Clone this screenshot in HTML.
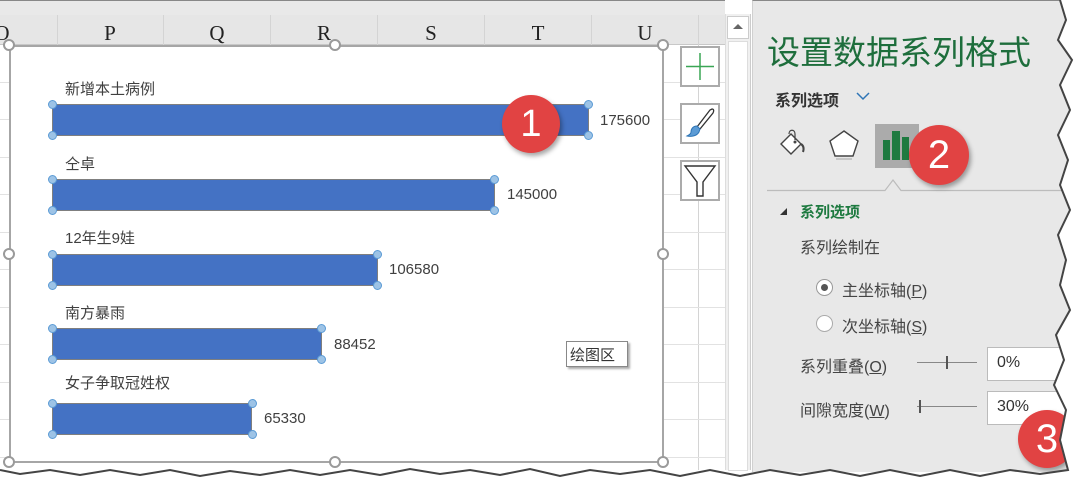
<!DOCTYPE html>
<html><head><meta charset="utf-8"><style>
*{margin:0;padding:0;box-sizing:border-box}
body{width:1080px;height:496px;overflow:hidden;background:#fff;position:relative;font-family:"Liberation Sans","Noto Sans CJK SC",sans-serif}
.abs{position:absolute}
.lbl{position:absolute;font-size:15px;color:#404040;white-space:nowrap}
.val{position:absolute;font-size:15px;color:#404040}
.bar{position:absolute;background:#4472c4;border:1px solid #7f7f7f}
.pt{position:absolute;width:9px;height:9px;border-radius:50%;background:#9dc3e6;border:1px solid #5b9bd5}
.hd{position:absolute;width:12px;height:12px;border-radius:50%;background:#fff;border:2px solid #9a9a9a}
.btn{position:absolute;left:680px;width:40px;height:41px;background:#fff;border:2px solid #ababab}
.badge{position:absolute;border-radius:50%;background:#e14343;color:#fff;text-align:center;font-family:"Liberation Sans",sans-serif;box-shadow:2px 3px 5px rgba(0,0,0,.35)}
.pt2{position:absolute;font-size:16px;color:#444;white-space:nowrap}
</style></head><body>
<div class="abs" style="left:0;top:0;width:1080px;height:470px;background:#fff"></div>
<div class="abs" style="left:0;top:0;width:725px;height:15px;background:#e9e9e9;border-top:1px solid #888"></div>
<div class="abs" style="left:0;top:15px;width:725px;height:30px;background:#e6e6e6;border-bottom:1px solid #c8c8c8"></div>
<svg class="abs" style="left:0;top:0" width="725" height="470">
<g stroke="#d4d4d4" stroke-width="1">
<line x1="57.5" y1="15" x2="57.5" y2="45"/><line x1="163.5" y1="15" x2="163.5" y2="45"/><line x1="270.5" y1="15" x2="270.5" y2="45"/><line x1="377.5" y1="15" x2="377.5" y2="45"/><line x1="484.5" y1="15" x2="484.5" y2="45"/><line x1="591.5" y1="15" x2="591.5" y2="45"/><line x1="698.5" y1="15" x2="698.5" y2="470"/>
</g>
<g stroke="#e2e2e2"><line x1="0" y1="82.5" x2="725" y2="82.5"/><line x1="0" y1="119.5" x2="725" y2="119.5"/><line x1="0" y1="157.5" x2="725" y2="157.5"/><line x1="0" y1="194.5" x2="725" y2="194.5"/><line x1="0" y1="232.5" x2="725" y2="232.5"/><line x1="0" y1="269.5" x2="725" y2="269.5"/><line x1="0" y1="307.5" x2="725" y2="307.5"/><line x1="0" y1="344.5" x2="725" y2="344.5"/><line x1="0" y1="382.5" x2="725" y2="382.5"/><line x1="0" y1="419.5" x2="725" y2="419.5"/><line x1="0" y1="457.5" x2="725" y2="457.5"/></g>
<g font-family="Liberation Serif,serif" font-size="21" fill="#222" text-anchor="middle">
<text x="2" y="40">O</text><text x="110" y="40">P</text><text x="217" y="40">Q</text><text x="324" y="40">R</text><text x="431" y="40">S</text><text x="538" y="40">T</text><text x="645" y="40">U</text></g>
</svg>
<div class="abs" style="left:9px;top:45px;width:655px;height:418px;background:#fff;border:2px solid #a6a6a6"></div>
<div class="hd" style="left:3px;top:39px"></div><div class="hd" style="left:329px;top:39px"></div><div class="hd" style="left:657px;top:39px"></div>
<div class="hd" style="left:3px;top:248px"></div><div class="hd" style="left:657px;top:248px"></div>
<div class="hd" style="left:3px;top:456px"></div><div class="hd" style="left:329px;top:456px"></div><div class="hd" style="left:657px;top:456px"></div>

<div class="lbl" style="left:65px;top:78px">新增本土病例</div>
<div class="bar" style="left:52px;top:104px;width:537px;height:32px"></div>
<div class="val" style="left:600px;top:112px">175600</div>
<div class="lbl" style="left:65px;top:153px">仝卓</div>
<div class="bar" style="left:52px;top:179px;width:443px;height:32px"></div>
<div class="val" style="left:507px;top:186px">145000</div>
<div class="lbl" style="left:65px;top:227px">12年生9娃</div>
<div class="bar" style="left:52px;top:254px;width:326px;height:32px"></div>
<div class="val" style="left:389px;top:261px">106580</div>
<div class="lbl" style="left:65px;top:302px">南方暴雨</div>
<div class="bar" style="left:52px;top:328px;width:270px;height:32px"></div>
<div class="val" style="left:334px;top:336px">88452</div>
<div class="lbl" style="left:65px;top:372px">女子争取冠姓权</div>
<div class="bar" style="left:52px;top:403px;width:200px;height:32px"></div>
<div class="val" style="left:264px;top:410px">65330</div>
<div class="pt" style="left:48px;top:100px"></div><div class="pt" style="left:584px;top:100px"></div><div class="pt" style="left:48px;top:131px"></div><div class="pt" style="left:584px;top:131px"></div>
<div class="pt" style="left:48px;top:175px"></div><div class="pt" style="left:490px;top:175px"></div><div class="pt" style="left:48px;top:206px"></div><div class="pt" style="left:490px;top:206px"></div>
<div class="pt" style="left:48px;top:250px"></div><div class="pt" style="left:373px;top:250px"></div><div class="pt" style="left:48px;top:281px"></div><div class="pt" style="left:373px;top:281px"></div>
<div class="pt" style="left:48px;top:324px"></div><div class="pt" style="left:317px;top:324px"></div><div class="pt" style="left:48px;top:355px"></div><div class="pt" style="left:317px;top:355px"></div>
<div class="pt" style="left:48px;top:399px"></div><div class="pt" style="left:248px;top:399px"></div><div class="pt" style="left:48px;top:430px"></div><div class="pt" style="left:248px;top:430px"></div>
<div class="abs" style="left:566px;top:341px;width:62px;height:26px;background:#fff;border:1px solid #888;box-shadow:2px 2px 2px #aaa;font-size:15px;color:#333;padding:2px 3px">绘图区</div>
<div class="badge" style="left:502px;top:95px;width:58px;height:58px;font-size:38px;line-height:58px">1</div>

<div class="btn" style="top:46px"><svg width="36" height="37"><path d="M18 5V32M4 18.5H32" stroke="#3aa655" stroke-width="1.5"/></svg></div>
<div class="btn" style="top:103px"><svg width="36" height="37"><path d="M30 4c2 0 2 2 1 4L18 24l-3-2L28 5z" fill="#fff" stroke="#333" stroke-width="1.3"/><path d="M15 21c-4 0-6 3-6 6 0 2-2 3-4 4 4 1 10 0 12-4l1-3z" fill="#5b9bd5" stroke="#2e75b6"/></svg></div>
<div class="btn" style="top:160px"><svg width="36" height="37"><path d="M3 4H33L21 20V34H15V20z" fill="#fff" stroke="#333" stroke-width="1.4"/></svg></div>
<div class="abs" style="left:725px;top:14px;width:26px;height:456px;background:#f0f0f0;border-left:1px solid #ddd;border-right:1px solid #ccc"></div>
<div class="abs" style="left:727px;top:16px;width:22px;height:23px;background:#fff;border:1px solid #ccc"></div>
<div class="abs" style="left:733px;top:24px;width:0;height:0;border-left:5px solid transparent;border-right:5px solid transparent;border-bottom:5px solid #666"></div>
<div class="abs" style="left:728px;top:41px;width:20px;height:430px;background:#fff;border:1px solid #ddd"></div>
<div class="abs" style="left:752px;top:0;width:320px;height:472px;background:#e8e8e8;border-left:1px solid #d0d0d0;border-top:1px solid #888"></div>
<div class="abs" style="left:767px;top:26px;font-size:33px;color:#1e6e3c;white-space:nowrap;font-family:'Noto Sans CJK SC',sans-serif">设置数据系列格式</div>
<div class="abs" style="left:775px;top:87px;font-size:16px;font-weight:bold;color:#333">系列选项</div>
<svg class="abs" style="left:855px;top:90px" width="16" height="12"><path d="M2 3l6 6 6-6" fill="none" stroke="#2e75b6" stroke-width="1.5"/></svg>
<svg class="abs" style="left:775px;top:125px" width="40" height="40"><path d="M6 19L16 9l10 10-10 10z" fill="#fff" stroke="#444" stroke-width="1.4"/><path d="M14 9c0-5 6-5 6 0v6" fill="none" stroke="#444" stroke-width="1.2"/><circle cx="20" cy="17" r="1.5" fill="#444"/><path d="M26 19c3 2 3 5 2 8" stroke="#444" stroke-width="2" fill="none"/></svg>
<svg class="abs" style="left:827px;top:128px" width="36" height="36"><path d="M17 3L31 13 26 28H8L3 13z" fill="#fff" stroke="#444" stroke-width="1.4"/><path d="M9 31H25" stroke="#bbb" stroke-width="1.5"/></svg>
<div class="abs" style="left:875px;top:124px;width:44px;height:44px;background:#ababab"></div>
<div class="abs" style="left:883px;top:140px;width:7px;height:20px;background:#1e7a40"></div>
<div class="abs" style="left:892px;top:131px;width:8px;height:29px;background:#1e7a40"></div>
<div class="abs" style="left:902px;top:137px;width:7px;height:23px;background:#1e7a40"></div>
<svg class="abs" style="left:767px;top:175px" width="300" height="20"><path d="M0 15.5H118L126 5l8 10.5H300" fill="none" stroke="#bcbcbc" stroke-width="1.2"/></svg>
<div class="badge" style="left:909px;top:125px;width:60px;height:60px;font-size:40px;line-height:60px">2</div>
<div class="abs" style="left:780px;top:208px;width:0;height:0;border-left:7px solid transparent;border-bottom:7px solid #333"></div>
<div class="abs" style="left:800px;top:201px;font-size:15px;font-weight:bold;color:#1e7a40">系列选项</div>
<div class="pt2" style="left:800px;top:234px">系列绘制在</div>
<div class="abs" style="left:816px;top:279px;width:17px;height:17px;border-radius:50%;background:#fff;border:1px solid #999"></div>
<div class="abs" style="left:821px;top:284px;width:7px;height:7px;border-radius:50%;background:#555"></div>
<div class="pt2" style="left:842px;top:277px">主坐标轴(<u>P</u>)</div>
<div class="abs" style="left:816px;top:315px;width:17px;height:17px;border-radius:50%;background:#fff;border:1px solid #aaa"></div>
<div class="pt2" style="left:842px;top:313px">次坐标轴(<u>S</u>)</div>
<div class="pt2" style="left:800px;top:353px">系列重叠(<u>O</u>)</div>
<div class="abs" style="left:917px;top:362px;width:60px;height:1px;background:#888"></div>
<div class="abs" style="left:946px;top:356px;width:2px;height:13px;background:#555"></div>
<div class="abs" style="left:987px;top:347px;width:80px;height:34px;background:#fff;border:1px solid #bbb;font-size:16px;color:#333;padding:6px 9px">0%</div>
<div class="pt2" style="left:800px;top:397px">间隙宽度(<u>W</u>)</div>
<div class="abs" style="left:917px;top:406px;width:60px;height:1px;background:#888"></div>
<div class="abs" style="left:919px;top:400px;width:2px;height:13px;background:#555"></div>
<div class="abs" style="left:987px;top:391px;width:80px;height:34px;background:#fff;border:1px solid #bbb;font-size:16px;color:#333;padding:6px 9px">30%</div>
<div class="badge" style="left:1018px;top:410px;width:58px;height:58px;font-size:40px;line-height:58px">3</div>
<svg class="abs" style="left:0;top:0" width="1080" height="496">
<path d="M1080 0H1060L1066 20 1058 40 1072 60 1060 85 1070 110 1058 135 1068 160 1060 185 1070 210 1058 235 1066 260 1060 285 1070 310 1056 335 1064 360 1054 385 1066 410 1060 440 1068 470 1040 474 1010 470 980 476 950 470 920 476 890 470 860 476 830 470 800 475 770 470 740 476 710 470 680 476 650 470 620 474 590 470 560 476 530 469 500 475 470 470 440 474 410 469 380 475 350 470 320 475 290 470 260 475 230 471 200 476 170 470 140 475 110 470 80 475 50 470 20 474 0 470V496H1080z" fill="#fff" stroke="none"/>
<path d="M1060 0L1066 20 1058 40 1072 60 1060 85 1070 110 1058 135 1068 160 1060 185 1070 210 1058 235 1066 260 1060 285 1070 310 1056 335 1064 360 1054 385 1066 410 1060 440 1068 470 1040 474 1010 470 980 476 950 470 920 476 890 470 860 476 830 470 800 475 770 470 740 476 710 470 680 476 650 470 620 474 590 470 560 476 530 469 500 475 470 470 440 474 410 469 380 475 350 470 320 475 290 470 260 475 230 471 200 476 170 470 140 475 110 470 80 475 50 470 20 474 0 470" fill="none" stroke="#444" stroke-width="2"/>
</svg>
</body></html>
